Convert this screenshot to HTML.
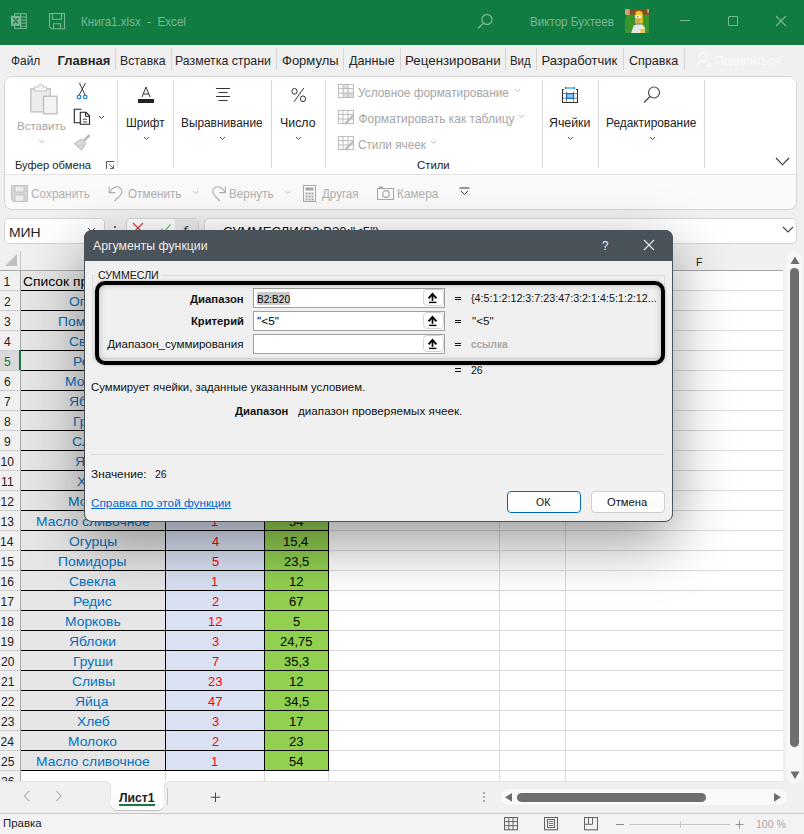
<!DOCTYPE html>
<html><head><meta charset='utf-8'><style>
html,body{margin:0;padding:0;width:804px;height:834px;overflow:hidden;position:relative;font-family:"Liberation Sans", sans-serif}
span{white-space:pre;line-height:1;font-family:"Liberation Sans", sans-serif}
</style></head><body>
<div style='position:absolute;left:0px;top:0px;width:804px;height:834px;background:#f0f0f0'></div><div style='position:absolute;left:0px;top:0px;width:804px;height:45px;background:#107c41'></div><svg style='position:absolute;left:10px;top:12px;' width='18' height='18' viewBox='0 0 18 18'><rect x='4.6' y='1.7' width='11.7' height='14.7' fill='none' stroke='#7bb796' stroke-width='1'/><line x1='10.7' y1='1.7' x2='10.7' y2='16.4' stroke='#7bb796'/><line x1='10.7' y1='5' x2='16.3' y2='5' stroke='#7bb796'/><line x1='10.7' y1='8.1' x2='16.3' y2='8.1' stroke='#7bb796'/><line x1='10.7' y1='11.1' x2='16.3' y2='11.1' stroke='#7bb796'/><line x1='10.7' y1='14.2' x2='16.3' y2='14.2' stroke='#7bb796'/><rect x='0.9' y='3.8' width='9.8' height='10' fill='#7bb796'/><path d='M3.3 6 L8.3 11.6 M8.3 6 L3.3 11.6' stroke='#2a8050' stroke-width='1.5'/></svg><svg style='position:absolute;left:48px;top:12px;' width='18' height='18' viewBox='0 0 18 18'><path d='M1.5 1.5 H16.5 V16.8 H3.5 L1.5 14.8 Z' fill='none' stroke='#7bb796' stroke-width='1.1'/><path d='M4.5 1.5 V7.3 H13.5 V1.5' fill='none' stroke='#7bb796' stroke-width='1.1'/><path d='M5.5 16.8 V11.7 H12.5 V16.8' fill='none' stroke='#7bb796' stroke-width='1.1'/></svg><span style='position:absolute;left:80.74px;top:15.90px;font-size:12.1px;font-weight:400;font-style:normal;color:#7bb796;transform:scaleX(0.9602);transform-origin:0 0;'>Книга1.xlsx  -  Excel</span><svg style='position:absolute;left:477px;top:13px;' width='17' height='17' viewBox='0 0 17 17'><circle cx='10' cy='6.5' r='5' fill='none' stroke='#7bb796' stroke-width='1.3'/><line x1='6.5' y1='10' x2='1' y2='15.5' stroke='#7bb796' stroke-width='1.4'/></svg><span style='position:absolute;left:529.64px;top:16.00px;font-size:12.1px;font-weight:400;font-style:normal;color:#7bb796;transform:scaleX(0.9605);transform-origin:0 0;'>Виктор Бухтеев</span><svg style='position:absolute;left:625px;top:9px;' width='24' height='24' viewBox='0 0 24 24'><rect width='24' height='24' fill='#3a962a'/><rect width='24' height='5.6' fill='#8a4b22'/><rect x='0' y='0' width='4.7' height='6' fill='#c9a27a'/><rect x='22.2' y='0' width='1.8' height='3.8' fill='#c9a27a'/><rect x='0' y='5.6' width='1' height='4' fill='#6a4a20'/><path d='M10.3 14.5 V5 Q10.5 1.8 14 1.8 Q17.8 1.8 17.8 5.5 V14.5 Z' fill='#f2c51c'/><ellipse cx='12' cy='7.3' rx='2' ry='1.6' fill='#fff'/><ellipse cx='14.6' cy='7.3' rx='1.6' ry='1.5' fill='#fff'/><circle cx='12.8' cy='7.4' r='0.6' fill='#222'/><path d='M10 9.5 H15.5 V13.5 Q13 14.5 10 13 Z' fill='#d1a85c'/><path d='M6.2 24 L9 15.5 H17.5 L19.8 18.3 V24 Z' fill='#e6e6e6'/><rect x='15.5' y='20' width='3.8' height='4' fill='#f2c51c'/><path d='M9 15.5 L10.5 15.5' stroke='#333' stroke-width='0.8'/></svg><div style='position:absolute;left:680px;top:20px;width:10px;height:1px;background:#7bb796'></div><div style='position:absolute;left:728px;top:16px;width:10px;height:10px;border:1px solid #7bb796;box-sizing:border-box;border-radius:1px'></div><svg style='position:absolute;left:775px;top:15px;' width='12' height='12' viewBox='0 0 12 12'><line x1='1' y1='1' x2='11' y2='11' stroke='#7bb796' stroke-width='1.1'/><line x1='11' y1='1' x2='1' y2='11' stroke='#7bb796' stroke-width='1.1'/></svg><span style='position:absolute;left:11.20px;top:53.80px;font-size:13px;font-weight:400;font-style:normal;color:#262626;transform:scaleX(0.9156);transform-origin:0 0;'>Файл</span><span style='position:absolute;left:57.50px;top:53.80px;font-size:13px;font-weight:700;font-style:normal;color:#262626;'>Главная</span><span style='position:absolute;left:120.06px;top:53.80px;font-size:13px;font-weight:400;font-style:normal;color:#262626;transform:scaleX(0.9447);transform-origin:0 0;'>Вставка</span><span style='position:absolute;left:175.25px;top:53.80px;font-size:13px;font-weight:400;font-style:normal;color:#262626;transform:scaleX(0.9480);transform-origin:0 0;'>Разметка страни</span><span style='position:absolute;left:282.00px;top:53.80px;font-size:13px;font-weight:400;font-style:normal;color:#262626;'>Формулы</span><span style='position:absolute;left:348.80px;top:53.80px;font-size:13px;font-weight:400;font-style:normal;color:#262626;transform:scaleX(0.9723);transform-origin:0 0;'>Данные</span><span style='position:absolute;left:404.57px;top:53.80px;font-size:13px;font-weight:400;font-style:normal;color:#262626;transform:scaleX(1.0261);transform-origin:0 0;'>Рецензировани</span><span style='position:absolute;left:509.52px;top:53.80px;font-size:13px;font-weight:400;font-style:normal;color:#262626;transform:scaleX(0.8783);transform-origin:0 0;'>Вид</span><span style='position:absolute;left:541.40px;top:53.80px;font-size:13px;font-weight:400;font-style:normal;color:#262626;'>Разработчик</span><span style='position:absolute;left:629.20px;top:53.80px;font-size:13px;font-weight:400;font-style:normal;color:#262626;transform:scaleX(0.9647);transform-origin:0 0;'>Справка</span><div style='position:absolute;left:115px;top:48px;width:1px;height:22px;background:#d4d4d4'></div><div style='position:absolute;left:171px;top:48px;width:1px;height:22px;background:#d4d4d4'></div><div style='position:absolute;left:276px;top:48px;width:1px;height:22px;background:#d4d4d4'></div><div style='position:absolute;left:343px;top:48px;width:1px;height:22px;background:#d4d4d4'></div><div style='position:absolute;left:400px;top:48px;width:1px;height:22px;background:#d4d4d4'></div><div style='position:absolute;left:505px;top:48px;width:1px;height:22px;background:#d4d4d4'></div><div style='position:absolute;left:536px;top:48px;width:1px;height:22px;background:#d4d4d4'></div><div style='position:absolute;left:623px;top:48px;width:1px;height:22px;background:#d4d4d4'></div><div style='position:absolute;left:684px;top:48px;width:1px;height:22px;background:#d4d4d4'></div><svg style='position:absolute;left:696px;top:52px;' width='17' height='17' viewBox='0 0 17 17'><circle cx='7' cy='5' r='4' fill='none' stroke='#fafafa' stroke-width='1.2'/><path d='M1 16 C1 11 4 9.5 7 9.5 C9 9.5 10 10 11 10.5' fill='none' stroke='#fafafa' stroke-width='1.2'/><line x1='10' y1='13.5' x2='16' y2='13.5' stroke='#fafafa' stroke-width='1.2'/><line x1='13' y1='10.5' x2='13' y2='16.5' stroke='#fafafa' stroke-width='1.2'/></svg><span style='position:absolute;left:715.09px;top:53.80px;font-size:13px;font-weight:400;font-style:normal;color:#fafafa;transform:scaleX(0.9143);transform-origin:0 0;'>Поделиться</span><div style='position:absolute;left:3.5px;top:75.5px;width:793px;height:134px;background:#fafafa;border:1px solid #d6d6d6;border-radius:8px;box-sizing:border-box'></div><div style='position:absolute;left:4.5px;top:76.5px;width:791px;height:97.5px;background:#fff;border-radius:7px 7px 0 0'></div><div style='position:absolute;left:4.5px;top:174px;width:791px;height:1px;background:#e1e1e1'></div><div style='position:absolute;left:117px;top:80px;width:1px;height:88px;background:#d9d9d9'></div><div style='position:absolute;left:173px;top:80px;width:1px;height:88px;background:#d9d9d9'></div><div style='position:absolute;left:271px;top:80px;width:1px;height:88px;background:#d9d9d9'></div><div style='position:absolute;left:325px;top:80px;width:1px;height:88px;background:#d9d9d9'></div><div style='position:absolute;left:542px;top:80px;width:1px;height:88px;background:#d9d9d9'></div><div style='position:absolute;left:598px;top:80px;width:1px;height:88px;background:#d9d9d9'></div><div style='position:absolute;left:704px;top:80px;width:1px;height:88px;background:#d9d9d9'></div><svg style='position:absolute;left:29px;top:83px;' width='30' height='32' viewBox='0 0 30 32'><rect x='1.8' y='5.8' width='19.5' height='23' fill='#ececec' stroke='#c8c8c8' stroke-width='1.6'/><path d='M5.5 8 V4 H9 A2.5 2.5 0 0 1 14 4 H17.5 V8 Z' fill='#f5f5f5' stroke='#c8c8c8' stroke-width='1.1'/><rect x='14.5' y='13.2' width='13.5' height='17.6' fill='#f3f3f3' stroke='#bcbcbc' stroke-width='1.3'/></svg><span style='position:absolute;left:16.61px;top:119.90px;font-size:11.7px;font-weight:400;font-style:normal;color:#a6a6a6;transform:scaleX(0.9854);transform-origin:0 0;'>Вставить</span><svg style='position:absolute;left:37.7px;top:138.75px;' width='7' height='4.5' viewBox='0 0 7 4.5'><polyline points='1,1 3.5,3.5 6,1' fill='none' stroke='#bdbdbd' stroke-width='1'/></svg><svg style='position:absolute;left:76px;top:82px;' width='14' height='18' viewBox='0 0 14 18'><line x1='3.5' y1='1' x2='9.2' y2='13.3' stroke='#333' stroke-width='1'/><line x1='9.5' y1='1' x2='3' y2='13.3' stroke='#333' stroke-width='1'/><circle cx='3' cy='15' r='1.8' fill='none' stroke='#1e88e5' stroke-width='1.3'/><circle cx='9.2' cy='15' r='1.8' fill='none' stroke='#1e88e5' stroke-width='1.3'/></svg><svg style='position:absolute;left:73px;top:108px;' width='18' height='18' viewBox='0 0 18 18'><path d='M8.5 1.3 H1.3 V14.8 H7' fill='none' stroke='#222' stroke-width='1.1'/><path d='M7.3 4.3 H13 L16.5 7.8 V16.3 H7.3 Z' fill='#fff' stroke='#222' stroke-width='1.1'/><path d='M12.5 4.3 V8.3 H16.5' fill='none' stroke='#222' stroke-width='1'/><line x1='10' y1='11.2' x2='14' y2='11.2' stroke='#333' stroke-width='0.9'/><line x1='10' y1='13.9' x2='14' y2='13.9' stroke='#333' stroke-width='0.9'/></svg><svg style='position:absolute;left:97.5px;top:114.75px;' width='7' height='4.5' viewBox='0 0 7 4.5'><polyline points='1,1 3.5,3.5 6,1' fill='none' stroke='#444' stroke-width='1'/></svg><svg style='position:absolute;left:73px;top:134px;' width='18' height='17' viewBox='0 0 18 17'><line x1='15.8' y1='1.8' x2='11.5' y2='6.2' stroke='#b4b4b4' stroke-width='2.4' stroke-linecap='round'/><path d='M1.5 9.5 L8.5 5 L12.8 9.3 L8.5 16 Z' fill='#dadada' stroke='#b4b4b4' stroke-width='1'/><path d='M5 12 L10.5 11' stroke='#c4c4c4' stroke-width='0.8'/></svg><span style='position:absolute;left:14.68px;top:160.00px;font-size:11px;font-weight:400;font-style:normal;color:#222;transform:scaleX(1.0176);transform-origin:0 0;'>Буфер обмена</span><svg style='position:absolute;left:106px;top:161px;' width='9' height='9' viewBox='0 0 9 9'><rect x='0.5' y='0.5' width='7.5' height='7.5' fill='none' stroke='#555' stroke-width='0.8' stroke-dasharray='8 16'/><path d='M0.5 8 V0.5 H8' fill='none' stroke='#555' stroke-width='0.9'/><line x1='3' y1='3' x2='7.5' y2='7.5' stroke='#555' stroke-width='0.9'/><path d='M4 7.5 H7.5 V4' fill='none' stroke='#555' stroke-width='0.9'/></svg><svg style='position:absolute;left:137px;top:86px;' width='18' height='18' viewBox='0 0 18 18'><path d='M5 11 L9 1 L13 11 M6.3 8 H11.7' fill='none' stroke='#333' stroke-width='1'/><rect x='1' y='13' width='16' height='4' fill='#222'/></svg><span style='position:absolute;left:125.72px;top:117.00px;font-size:12px;font-weight:400;font-style:normal;color:#222;transform:scaleX(0.9769);transform-origin:0 0;'>Шрифт</span><svg style='position:absolute;left:142.7px;top:135.75px;' width='7' height='4.5' viewBox='0 0 7 4.5'><polyline points='1,1 3.5,3.5 6,1' fill='none' stroke='#555' stroke-width='1'/></svg><svg style='position:absolute;left:215px;top:87px;' width='17' height='15' viewBox='0 0 17 15'><line x1='1' y1='1.5' x2='15' y2='1.5' stroke='#333'/><line x1='3.5' y1='5.5' x2='12.5' y2='5.5' stroke='#333'/><line x1='1' y1='9.5' x2='15' y2='9.5' stroke='#333'/><line x1='3.5' y1='13.5' x2='12.5' y2='13.5' stroke='#333'/></svg><span style='position:absolute;left:181.01px;top:117.00px;font-size:12px;font-weight:400;font-style:normal;color:#222;transform:scaleX(0.9878);transform-origin:0 0;'>Выравнивание</span><svg style='position:absolute;left:219.0px;top:135.75px;' width='7' height='4.5' viewBox='0 0 7 4.5'><polyline points='1,1 3.5,3.5 6,1' fill='none' stroke='#555' stroke-width='1'/></svg><svg style='position:absolute;left:290px;top:87px;' width='18' height='17' viewBox='0 0 18 17'><ellipse cx='4.5' cy='4.3' rx='2.6' ry='2.9' fill='none' stroke='#333' stroke-width='1'/><ellipse cx='13' cy='11.8' rx='2.6' ry='2.9' fill='none' stroke='#333' stroke-width='1'/><line x1='13.8' y1='1' x2='4' y2='14.8' stroke='#333' stroke-width='1'/></svg><span style='position:absolute;left:279.97px;top:117.00px;font-size:12px;font-weight:400;font-style:normal;color:#222;transform:scaleX(1.0303);transform-origin:0 0;'>Число</span><svg style='position:absolute;left:295.0px;top:135.75px;' width='7' height='4.5' viewBox='0 0 7 4.5'><polyline points='1,1 3.5,3.5 6,1' fill='none' stroke='#555' stroke-width='1'/></svg><svg style='position:absolute;left:338px;top:84px;' width='16' height='15' viewBox='0 0 16 15'><rect x='5' y='1' width='5' height='3.5' fill='#dcdcdc'/><rect x='5' y='5' width='1' height='4' fill='#dcdcdc'/><rect x='5' y='9' width='10' height='4.5' fill='#dcdcdc'/><rect x='6' y='5' width='9' height='4' fill='#f4f4f4'/></svg><svg style='position:absolute;left:338px;top:84px;' width='16' height='15' viewBox='0 0 16 15'><rect x='0.5' y='0.5' width='15' height='13' fill='none' stroke='#bdbdbd'/><line x1='0.5' y1='4.5' x2='15.5' y2='4.5' stroke='#bdbdbd'/><line x1='0.5' y1='9' x2='15.5' y2='9' stroke='#bdbdbd'/><line x1='5' y1='0.5' x2='5' y2='13.5' stroke='#bdbdbd'/><line x1='10' y1='0.5' x2='10' y2='13.5' stroke='#bdbdbd'/></svg><span style='position:absolute;left:358.40px;top:86.50px;font-size:12px;font-weight:400;font-style:normal;color:#a6a6a6;transform:scaleX(0.9889);transform-origin:0 0;'>Условное форматирование</span><svg style='position:absolute;left:513.5px;top:88.25px;' width='7' height='4.5' viewBox='0 0 7 4.5'><polyline points='1,1 3.5,3.5 6,1' fill='none' stroke='#bdbdbd' stroke-width='1'/></svg><svg style='position:absolute;left:338px;top:110px;' width='16' height='15' viewBox='0 0 16 15'><rect x='0.5' y='0.5' width='15' height='13' fill='none' stroke='#bdbdbd'/><line x1='0.5' y1='4.5' x2='15.5' y2='4.5' stroke='#bdbdbd'/><line x1='0.5' y1='9' x2='15.5' y2='9' stroke='#bdbdbd'/><line x1='5' y1='0.5' x2='5' y2='13.5' stroke='#bdbdbd'/><line x1='10' y1='0.5' x2='10' y2='13.5' stroke='#bdbdbd'/></svg><svg style='position:absolute;left:344px;top:113px;' width='11' height='12' viewBox='0 0 11 12'><path d='M1.5 10.5 L9.5 2' stroke='#bdbdbd' stroke-width='2.4'/><path d='M1 11 L3 11' stroke='#bdbdbd' stroke-width='1'/></svg><span style='position:absolute;left:358.40px;top:112.50px;font-size:12px;font-weight:400;font-style:normal;color:#a6a6a6;'>Форматировать как таблицу</span><svg style='position:absolute;left:517.5px;top:114.25px;' width='7' height='4.5' viewBox='0 0 7 4.5'><polyline points='1,1 3.5,3.5 6,1' fill='none' stroke='#bdbdbd' stroke-width='1'/></svg><svg style='position:absolute;left:338px;top:136px;' width='16' height='15' viewBox='0 0 16 15'><rect x='0.5' y='0.5' width='15' height='13' fill='none' stroke='#bdbdbd'/><line x1='0.5' y1='4.5' x2='15.5' y2='4.5' stroke='#bdbdbd'/><line x1='0.5' y1='9' x2='15.5' y2='9' stroke='#bdbdbd'/><line x1='5' y1='0.5' x2='5' y2='13.5' stroke='#bdbdbd'/><line x1='10' y1='0.5' x2='10' y2='13.5' stroke='#bdbdbd'/></svg><svg style='position:absolute;left:344px;top:139px;' width='11' height='12' viewBox='0 0 11 12'><path d='M1.5 10.5 L9.5 2' stroke='#bdbdbd' stroke-width='2.4'/><path d='M1 11 L3 11' stroke='#bdbdbd' stroke-width='1'/></svg><span style='position:absolute;left:358.40px;top:138.50px;font-size:12px;font-weight:400;font-style:normal;color:#a6a6a6;transform:scaleX(0.9797);transform-origin:0 0;'>Стили ячеек</span><svg style='position:absolute;left:429.5px;top:140.25px;' width='7' height='4.5' viewBox='0 0 7 4.5'><polyline points='1,1 3.5,3.5 6,1' fill='none' stroke='#bdbdbd' stroke-width='1'/></svg><span style='position:absolute;left:417.00px;top:160.00px;font-size:11px;font-weight:400;font-style:normal;color:#222;transform:scaleX(1.0323);transform-origin:0 0;'>Стили</span><svg style='position:absolute;left:561px;top:85px;' width='18' height='19' viewBox='0 0 18 19'><path d='M3 4.5 H1.5 V17.5 H16.5 V4.5 H15' fill='none' stroke='#333' stroke-width='1.1'/><line x1='1.5' y1='8.5' x2='16.5' y2='8.5' stroke='#555' stroke-width='0.7'/><line x1='1.5' y1='13.3' x2='16.5' y2='13.3' stroke='#555' stroke-width='0.7'/><line x1='5.5' y1='6.5' x2='5.5' y2='17.5' stroke='#555' stroke-width='0.7'/><line x1='12.5' y1='6.5' x2='12.5' y2='17.5' stroke='#555' stroke-width='0.7'/><rect x='5.6' y='8.6' width='7' height='4.8' fill='#8cc4f0' stroke='#0f6cbd' stroke-width='1.2'/><line x1='4.5' y1='3' x2='13.5' y2='3' stroke='#1a86d8' stroke-width='1.1'/><line x1='4.5' y1='1.8' x2='4.5' y2='4.2' stroke='#1a86d8' stroke-width='1.1'/><line x1='13.5' y1='1.8' x2='13.5' y2='4.2' stroke='#1a86d8' stroke-width='1.1'/></svg><span style='position:absolute;left:548.87px;top:117.00px;font-size:12px;font-weight:400;font-style:normal;color:#222;transform:scaleX(1.0256);transform-origin:0 0;'>Ячейки</span><svg style='position:absolute;left:566.5px;top:135.75px;' width='7' height='4.5' viewBox='0 0 7 4.5'><polyline points='1,1 3.5,3.5 6,1' fill='none' stroke='#555' stroke-width='1'/></svg><svg style='position:absolute;left:643px;top:86px;' width='18' height='18' viewBox='0 0 18 18'><circle cx='11' cy='6.5' r='5.5' fill='none' stroke='#444' stroke-width='1.1'/><line x1='7' y1='10.5' x2='1' y2='16.5' stroke='#444' stroke-width='1.2'/></svg><span style='position:absolute;left:606.01px;top:117.00px;font-size:12px;font-weight:400;font-style:normal;color:#222;transform:scaleX(0.9889);transform-origin:0 0;'>Редактирование</span><svg style='position:absolute;left:648.5px;top:135.75px;' width='7' height='4.5' viewBox='0 0 7 4.5'><polyline points='1,1 3.5,3.5 6,1' fill='none' stroke='#555' stroke-width='1'/></svg><svg style='position:absolute;left:775.0px;top:156.9px;' width='15' height='8.8' viewBox='0 0 15 8.8'><polyline points='1,1 7.5,7.8 14,1' fill='none' stroke='#333' stroke-width='1.1'/></svg><svg style='position:absolute;left:11px;top:185px;' width='17' height='17' viewBox='0 0 17 17'><path d='M0.5 0.5 H16.5 V16.5 H2.5 L0.5 14.5 Z' fill='#d6d6d6' stroke='#c2c2c2'/><rect x='4' y='1' width='9' height='6' fill='#ededed' stroke='#c2c2c2'/><rect x='4' y='10' width='9' height='6.5' fill='#ededed' stroke='#c2c2c2'/></svg><span style='position:absolute;left:31.00px;top:188.00px;font-size:12px;font-weight:400;font-style:normal;color:#b0b0b0;transform:scaleX(0.9867);transform-origin:0 0;'>Сохранить</span><svg style='position:absolute;left:107px;top:184px;' width='17' height='18' viewBox='0 0 17 18'><path d='M2.2 2.5 V8.6 H8.4' fill='none' stroke='#b0b0b0' stroke-width='1.1'/><path d='M2.6 8 C6 2.5 10.5 1.8 13.2 4 C15.8 6.3 15 9.5 13 11.6 L7.6 17' fill='none' stroke='#b0b0b0' stroke-width='1.1'/></svg><span style='position:absolute;left:128.40px;top:188.00px;font-size:12px;font-weight:400;font-style:normal;color:#b0b0b0;transform:scaleX(0.9745);transform-origin:0 0;'>Отменить</span><svg style='position:absolute;left:191.8px;top:189.75px;' width='7' height='4.5' viewBox='0 0 7 4.5'><polyline points='1,1 3.5,3.5 6,1' fill='none' stroke='#bdbdbd' stroke-width='1'/></svg><svg style='position:absolute;left:210px;top:184px;' width='17' height='18' viewBox='0 0 17 18'><path d='M15.4 2.5 V8.6 H9.2' fill='none' stroke='#b0b0b0' stroke-width='1.1'/><path d='M15 8 C11.6 2.5 7.1 1.8 4.4 4 C1.8 6.3 2.6 9.5 4.6 11.6 L10 17' fill='none' stroke='#b0b0b0' stroke-width='1.1'/></svg><span style='position:absolute;left:228.52px;top:188.00px;font-size:12px;font-weight:400;font-style:normal;color:#b0b0b0;transform:scaleX(0.9778);transform-origin:0 0;'>Вернуть</span><svg style='position:absolute;left:284.0px;top:189.75px;' width='7' height='4.5' viewBox='0 0 7 4.5'><polyline points='1,1 3.5,3.5 6,1' fill='none' stroke='#bdbdbd' stroke-width='1'/></svg><svg style='position:absolute;left:303px;top:185px;' width='13' height='17' viewBox='0 0 13 17'><rect x='0.5' y='0.5' width='12' height='16' fill='none' stroke='#a8a8a8'/><rect x='2.5' y='2.5' width='8' height='3' fill='#a8a8a8'/><g fill='#a8a8a8'><rect x='2.5' y='7.5' width='2' height='2'/><rect x='5.5' y='7.5' width='2' height='2'/><rect x='8.5' y='7.5' width='2' height='2'/><rect x='2.5' y='10.5' width='2' height='2'/><rect x='5.5' y='10.5' width='2' height='2'/><rect x='8.5' y='10.5' width='2' height='2'/><rect x='2.5' y='13.5' width='2' height='2'/><rect x='5.5' y='13.5' width='2' height='2'/><rect x='8.5' y='13.5' width='2' height='2'/></g></svg><span style='position:absolute;left:322.40px;top:188.00px;font-size:12px;font-weight:400;font-style:normal;color:#b0b0b0;transform:scaleX(0.9632);transform-origin:0 0;'>Другая</span><svg style='position:absolute;left:377px;top:186px;' width='17' height='14' viewBox='0 0 17 14'><rect x='0.5' y='2.5' width='16' height='11' fill='none' stroke='#a8a8a8'/><rect x='2' y='0.5' width='4' height='2' fill='#a8a8a8'/><circle cx='9' cy='8' r='3.3' fill='none' stroke='#a8a8a8' stroke-width='1.2'/></svg><span style='position:absolute;left:396.91px;top:188.00px;font-size:12px;font-weight:400;font-style:normal;color:#b0b0b0;transform:scaleX(0.9854);transform-origin:0 0;'>Камера</span><svg style='position:absolute;left:459px;top:187px;' width='11' height='9' viewBox='0 0 11 9'><line x1='0.5' y1='1' x2='10.5' y2='1' stroke='#333'/><polyline points='2,4 5.5,7.5 9,4' fill='none' stroke='#333'/></svg><div style='position:absolute;left:3.5px;top:218px;width:101px;height:26px;background:#fff;border:1px solid #d6d6d6;border-radius:5px;box-sizing:border-box'></div><span style='position:absolute;left:9.19px;top:226.50px;font-size:12.5px;font-weight:400;font-style:normal;color:#222;transform:scaleX(1.1148);transform-origin:0 0;'>МИН</span><svg style='position:absolute;left:86.5px;top:227.25px;' width='9' height='5.5' viewBox='0 0 9 5.5'><polyline points='1,1 4.5,4.5 8,1' fill='none' stroke='#444' stroke-width='1'/></svg><div style='position:absolute;left:114px;top:226px;width:2px;height:2px;background:#444;border-radius:1px'></div><div style='position:absolute;left:125.5px;top:218px;width:73px;height:26px;background:#fff;border:1px solid #d6d6d6;border-radius:5px;box-sizing:border-box'></div><svg style='position:absolute;left:132px;top:222px;' width='12' height='12' viewBox='0 0 12 12'><line x1='1' y1='1' x2='11' y2='11' stroke='#e03c3c' stroke-width='1.3'/><line x1='11' y1='1' x2='1' y2='11' stroke='#e03c3c' stroke-width='1.3'/></svg><svg style='position:absolute;left:160px;top:223px;' width='12' height='10' viewBox='0 0 12 10'><polyline points='1.5,6 4.2,8.8 10.5,1.5' fill='none' stroke='#4caf50' stroke-width='1.1'/></svg><div style='position:absolute;left:175px;top:219px;width:23px;height:24px;background:#ececec'></div><span style='position:absolute;left:182.80px;top:224.00px;font-size:13px;font-weight:400;font-style:italic;color:#444;transform:scaleX(1.1400);transform-origin:0 0;'>f</span><span style='position:absolute;left:188.50px;top:229.50px;font-size:8px;font-weight:400;font-style:italic;color:#444;transform:scaleX(1.1750);transform-origin:0 0;'>x</span><div style='position:absolute;left:203.5px;top:218px;width:593px;height:26px;background:#fff;border:1px solid #d6d6d6;border-radius:5px;box-sizing:border-box'></div><span style='position:absolute;left:222.80px;top:224.60px;font-size:13px;font-weight:400;font-style:normal;color:#111;transform:scaleX(1.0196);transform-origin:0 0;'>СУММЕСЛИ(B2:B20;"&lt;5")</span><svg style='position:absolute;left:781.7px;top:225.9px;' width='12' height='7' viewBox='0 0 12 7'><polyline points='1,1 6.0,6 11,1' fill='none' stroke='#444' stroke-width='1.1'/></svg><div style='position:absolute;left:0px;top:245px;width:783px;height:26px;background:#f0f0f0'></div><svg style='position:absolute;left:5px;top:254px;' width='13' height='13' viewBox='0 0 13 13'><polygon points='12,0 12,12 0,12' fill='#c0c0c0'/></svg><div style='position:absolute;left:20px;top:251px;width:1px;height:20px;background:#c8c8c8'></div><div style='position:absolute;left:0px;top:270px;width:783px;height:1px;background:#a8a8a8'></div><span style='position:absolute;left:695.58px;top:256.50px;font-size:11.5px;font-weight:400;font-style:normal;color:#222;transform:scaleX(0.9167);transform-origin:0 0;'>F</span><div style='position:absolute;left:0px;top:271px;width:20px;height:510px;background:#f0f0f0'></div><div style='position:absolute;left:0px;top:350px;width:19px;height:20px;background:#d9d9d9'></div><div style='position:absolute;left:0px;top:290px;width:20px;height:1px;background:#cdcdcd'></div><div style='position:absolute;left:0px;top:310px;width:20px;height:1px;background:#cdcdcd'></div><div style='position:absolute;left:0px;top:330px;width:20px;height:1px;background:#cdcdcd'></div><div style='position:absolute;left:0px;top:350px;width:20px;height:1px;background:#cdcdcd'></div><div style='position:absolute;left:0px;top:370px;width:20px;height:1px;background:#cdcdcd'></div><div style='position:absolute;left:0px;top:390px;width:20px;height:1px;background:#cdcdcd'></div><div style='position:absolute;left:0px;top:410px;width:20px;height:1px;background:#cdcdcd'></div><div style='position:absolute;left:0px;top:430px;width:20px;height:1px;background:#cdcdcd'></div><div style='position:absolute;left:0px;top:450px;width:20px;height:1px;background:#cdcdcd'></div><div style='position:absolute;left:0px;top:470px;width:20px;height:1px;background:#cdcdcd'></div><div style='position:absolute;left:0px;top:490px;width:20px;height:1px;background:#cdcdcd'></div><div style='position:absolute;left:0px;top:510px;width:20px;height:1px;background:#cdcdcd'></div><div style='position:absolute;left:0px;top:530px;width:20px;height:1px;background:#cdcdcd'></div><div style='position:absolute;left:0px;top:550px;width:20px;height:1px;background:#cdcdcd'></div><div style='position:absolute;left:0px;top:570px;width:20px;height:1px;background:#cdcdcd'></div><div style='position:absolute;left:0px;top:590px;width:20px;height:1px;background:#cdcdcd'></div><div style='position:absolute;left:0px;top:610px;width:20px;height:1px;background:#cdcdcd'></div><div style='position:absolute;left:0px;top:630px;width:20px;height:1px;background:#cdcdcd'></div><div style='position:absolute;left:0px;top:650px;width:20px;height:1px;background:#cdcdcd'></div><div style='position:absolute;left:0px;top:670px;width:20px;height:1px;background:#cdcdcd'></div><div style='position:absolute;left:0px;top:690px;width:20px;height:1px;background:#cdcdcd'></div><div style='position:absolute;left:0px;top:710px;width:20px;height:1px;background:#cdcdcd'></div><div style='position:absolute;left:0px;top:730px;width:20px;height:1px;background:#cdcdcd'></div><div style='position:absolute;left:0px;top:750px;width:20px;height:1px;background:#cdcdcd'></div><div style='position:absolute;left:0px;top:770px;width:20px;height:1px;background:#cdcdcd'></div><div style='position:absolute;left:0px;top:790px;width:20px;height:1px;background:#cdcdcd'></div><div style='position:absolute;left:20px;top:271px;width:1px;height:510px;background:#a8a8a8'></div><div style='position:absolute;left:19px;top:350px;width:2px;height:20px;background:#107c41'></div><div style='position:absolute;left:21px;top:271px;width:762px;height:510px;background:#fff'></div><div style='position:absolute;left:21px;top:271px;width:144px;height:500px;background:#e7e6e6'></div><div style='position:absolute;left:165px;top:291px;width:99px;height:480px;background:#d9e1f2'></div><div style='position:absolute;left:264px;top:291px;width:64px;height:480px;background:#92d050'></div><div style='position:absolute;left:328px;top:290px;width:455px;height:1px;background:#dadada'></div><div style='position:absolute;left:328px;top:310px;width:455px;height:1px;background:#dadada'></div><div style='position:absolute;left:328px;top:330px;width:455px;height:1px;background:#dadada'></div><div style='position:absolute;left:328px;top:350px;width:455px;height:1px;background:#dadada'></div><div style='position:absolute;left:328px;top:370px;width:455px;height:1px;background:#dadada'></div><div style='position:absolute;left:328px;top:390px;width:455px;height:1px;background:#dadada'></div><div style='position:absolute;left:328px;top:410px;width:455px;height:1px;background:#dadada'></div><div style='position:absolute;left:328px;top:430px;width:455px;height:1px;background:#dadada'></div><div style='position:absolute;left:328px;top:450px;width:455px;height:1px;background:#dadada'></div><div style='position:absolute;left:328px;top:470px;width:455px;height:1px;background:#dadada'></div><div style='position:absolute;left:328px;top:490px;width:455px;height:1px;background:#dadada'></div><div style='position:absolute;left:328px;top:510px;width:455px;height:1px;background:#dadada'></div><div style='position:absolute;left:328px;top:530px;width:455px;height:1px;background:#dadada'></div><div style='position:absolute;left:328px;top:550px;width:455px;height:1px;background:#dadada'></div><div style='position:absolute;left:328px;top:570px;width:455px;height:1px;background:#dadada'></div><div style='position:absolute;left:328px;top:590px;width:455px;height:1px;background:#dadada'></div><div style='position:absolute;left:328px;top:610px;width:455px;height:1px;background:#dadada'></div><div style='position:absolute;left:328px;top:630px;width:455px;height:1px;background:#dadada'></div><div style='position:absolute;left:328px;top:650px;width:455px;height:1px;background:#dadada'></div><div style='position:absolute;left:328px;top:670px;width:455px;height:1px;background:#dadada'></div><div style='position:absolute;left:328px;top:690px;width:455px;height:1px;background:#dadada'></div><div style='position:absolute;left:328px;top:710px;width:455px;height:1px;background:#dadada'></div><div style='position:absolute;left:328px;top:730px;width:455px;height:1px;background:#dadada'></div><div style='position:absolute;left:328px;top:750px;width:455px;height:1px;background:#dadada'></div><div style='position:absolute;left:328px;top:770px;width:455px;height:1px;background:#dadada'></div><div style='position:absolute;left:499px;top:271px;width:1px;height:510px;background:#dadada'></div><div style='position:absolute;left:565px;top:271px;width:1px;height:510px;background:#dadada'></div><div style='position:absolute;left:165px;top:771px;width:1px;height:10px;background:#dadada'></div><div style='position:absolute;left:264px;top:771px;width:1px;height:10px;background:#dadada'></div><div style='position:absolute;left:328px;top:771px;width:1px;height:10px;background:#dadada'></div><div style='position:absolute;left:21px;top:290px;width:308px;height:1px;background:#000'></div><div style='position:absolute;left:21px;top:310px;width:308px;height:1px;background:#000'></div><div style='position:absolute;left:21px;top:330px;width:308px;height:1px;background:#000'></div><div style='position:absolute;left:21px;top:350px;width:308px;height:1px;background:#000'></div><div style='position:absolute;left:21px;top:370px;width:308px;height:1px;background:#000'></div><div style='position:absolute;left:21px;top:390px;width:308px;height:1px;background:#000'></div><div style='position:absolute;left:21px;top:410px;width:308px;height:1px;background:#000'></div><div style='position:absolute;left:21px;top:430px;width:308px;height:1px;background:#000'></div><div style='position:absolute;left:21px;top:450px;width:308px;height:1px;background:#000'></div><div style='position:absolute;left:21px;top:470px;width:308px;height:1px;background:#000'></div><div style='position:absolute;left:21px;top:490px;width:308px;height:1px;background:#000'></div><div style='position:absolute;left:21px;top:510px;width:308px;height:1px;background:#000'></div><div style='position:absolute;left:21px;top:530px;width:308px;height:1px;background:#000'></div><div style='position:absolute;left:21px;top:550px;width:308px;height:1px;background:#000'></div><div style='position:absolute;left:21px;top:570px;width:308px;height:1px;background:#000'></div><div style='position:absolute;left:21px;top:590px;width:308px;height:1px;background:#000'></div><div style='position:absolute;left:21px;top:610px;width:308px;height:1px;background:#000'></div><div style='position:absolute;left:21px;top:630px;width:308px;height:1px;background:#000'></div><div style='position:absolute;left:21px;top:650px;width:308px;height:1px;background:#000'></div><div style='position:absolute;left:21px;top:670px;width:308px;height:1px;background:#000'></div><div style='position:absolute;left:21px;top:690px;width:308px;height:1px;background:#000'></div><div style='position:absolute;left:21px;top:710px;width:308px;height:1px;background:#000'></div><div style='position:absolute;left:21px;top:730px;width:308px;height:1px;background:#000'></div><div style='position:absolute;left:21px;top:750px;width:308px;height:1px;background:#000'></div><div style='position:absolute;left:21px;top:770px;width:308px;height:1px;background:#000'></div><div style='position:absolute;left:165px;top:271px;width:1px;height:500px;background:#000'></div><div style='position:absolute;left:264px;top:271px;width:1px;height:500px;background:#000'></div><div style='position:absolute;left:328px;top:271px;width:1px;height:500px;background:#000'></div><span style='position:absolute;left:3.60px;top:275.80px;font-size:12.1px;font-weight:400;font-style:normal;color:#222;'>1</span><span style='position:absolute;left:4.10px;top:295.80px;font-size:12.1px;font-weight:400;font-style:normal;color:#222;'>2</span><span style='position:absolute;left:4.10px;top:315.80px;font-size:12.1px;font-weight:400;font-style:normal;color:#222;'>3</span><span style='position:absolute;left:4.10px;top:335.80px;font-size:12.1px;font-weight:400;font-style:normal;color:#222;'>4</span><span style='position:absolute;left:4.10px;top:355.80px;font-size:12.1px;font-weight:400;font-style:normal;color:#107c41;'>5</span><span style='position:absolute;left:4.10px;top:375.80px;font-size:12.1px;font-weight:400;font-style:normal;color:#222;'>6</span><span style='position:absolute;left:4.10px;top:395.80px;font-size:12.1px;font-weight:400;font-style:normal;color:#222;'>7</span><span style='position:absolute;left:4.10px;top:415.80px;font-size:12.1px;font-weight:400;font-style:normal;color:#222;'>8</span><span style='position:absolute;left:4.10px;top:435.80px;font-size:12.1px;font-weight:400;font-style:normal;color:#222;'>9</span><span style='position:absolute;left:0.60px;top:455.80px;font-size:12.1px;font-weight:400;font-style:normal;color:#222;'>10</span><span style='position:absolute;left:1.10px;top:475.80px;font-size:12.1px;font-weight:400;font-style:normal;color:#222;'>11</span><span style='position:absolute;left:0.60px;top:495.80px;font-size:12.1px;font-weight:400;font-style:normal;color:#222;'>12</span><span style='position:absolute;left:0.60px;top:515.80px;font-size:12.1px;font-weight:400;font-style:normal;color:#222;'>13</span><span style='position:absolute;left:0.10px;top:535.80px;font-size:12.1px;font-weight:400;font-style:normal;color:#222;'>14</span><span style='position:absolute;left:0.60px;top:555.80px;font-size:12.1px;font-weight:400;font-style:normal;color:#222;'>15</span><span style='position:absolute;left:0.60px;top:575.80px;font-size:12.1px;font-weight:400;font-style:normal;color:#222;'>16</span><span style='position:absolute;left:0.60px;top:595.80px;font-size:12.1px;font-weight:400;font-style:normal;color:#222;'>17</span><span style='position:absolute;left:0.60px;top:615.80px;font-size:12.1px;font-weight:400;font-style:normal;color:#222;'>18</span><span style='position:absolute;left:0.60px;top:635.80px;font-size:12.1px;font-weight:400;font-style:normal;color:#222;'>19</span><span style='position:absolute;left:1.10px;top:655.80px;font-size:12.1px;font-weight:400;font-style:normal;color:#222;'>20</span><span style='position:absolute;left:1.10px;top:675.80px;font-size:12.1px;font-weight:400;font-style:normal;color:#222;'>21</span><span style='position:absolute;left:1.10px;top:695.80px;font-size:12.1px;font-weight:400;font-style:normal;color:#222;'>22</span><span style='position:absolute;left:1.10px;top:715.80px;font-size:12.1px;font-weight:400;font-style:normal;color:#222;'>23</span><span style='position:absolute;left:0.60px;top:735.80px;font-size:12.1px;font-weight:400;font-style:normal;color:#222;'>24</span><span style='position:absolute;left:1.10px;top:755.80px;font-size:12.1px;font-weight:400;font-style:normal;color:#222;'>25</span><span style='position:absolute;left:1.10px;top:775.80px;font-size:12.1px;font-weight:400;font-style:normal;color:#222;'>26</span><span style='position:absolute;left:23.30px;top:275.80px;font-size:12.6px;font-weight:400;font-style:normal;color:#000;transform:scaleX(1.1);transform-origin:0 0;'>Список продуктов</span><span style='position:absolute;left:69.35px;top:295.70px;font-size:12.6px;font-weight:400;color:#0070c0;transform:scaleX(1.1);transform-origin:0 0'>Огурцы</span><span style='position:absolute;left:211.70px;top:295.70px;font-size:12.6px;font-weight:400;color:#ff0000;transform:scaleX(1.03);transform-origin:0 0'>4</span><span style='position:absolute;left:282.91px;top:295.70px;font-size:12.6px;font-weight:400;color:#000;transform:scaleX(1.03);transform-origin:0 0'>15,4</span><span style='position:absolute;left:58.35px;top:315.70px;font-size:12.6px;font-weight:400;color:#0070c0;transform:scaleX(1.1);transform-origin:0 0'>Помидоры</span><span style='position:absolute;left:211.70px;top:315.70px;font-size:12.6px;font-weight:400;color:#ff0000;transform:scaleX(1.03);transform-origin:0 0'>5</span><span style='position:absolute;left:283.94px;top:315.70px;font-size:12.6px;font-weight:400;color:#000;transform:scaleX(1.03);transform-origin:0 0'>23,5</span><span style='position:absolute;left:69.35px;top:335.70px;font-size:12.6px;font-weight:400;color:#0070c0;transform:scaleX(1.1);transform-origin:0 0'>Свекла</span><span style='position:absolute;left:211.18px;top:335.70px;font-size:12.6px;font-weight:400;color:#ff0000;transform:scaleX(1.03);transform-origin:0 0'>1</span><span style='position:absolute;left:288.57px;top:335.70px;font-size:12.6px;font-weight:400;color:#000;transform:scaleX(1.03);transform-origin:0 0'>12</span><span style='position:absolute;left:73.20px;top:355.70px;font-size:12.6px;font-weight:400;color:#0070c0;transform:scaleX(1.1);transform-origin:0 0'>Редис</span><span style='position:absolute;left:211.70px;top:355.70px;font-size:12.6px;font-weight:400;color:#ff0000;transform:scaleX(1.03);transform-origin:0 0'>2</span><span style='position:absolute;left:289.09px;top:355.70px;font-size:12.6px;font-weight:400;color:#000;transform:scaleX(1.03);transform-origin:0 0'>67</span><span style='position:absolute;left:64.95px;top:375.70px;font-size:12.6px;font-weight:400;color:#0070c0;transform:scaleX(1.1);transform-origin:0 0'>Морковь</span><span style='position:absolute;left:207.58px;top:375.70px;font-size:12.6px;font-weight:400;color:#ff0000;transform:scaleX(1.03);transform-origin:0 0'>12</span><span style='position:absolute;left:292.69px;top:375.70px;font-size:12.6px;font-weight:400;color:#000;transform:scaleX(1.03);transform-origin:0 0'>5</span><span style='position:absolute;left:69.35px;top:395.70px;font-size:12.6px;font-weight:400;color:#0070c0;transform:scaleX(1.1);transform-origin:0 0'>Яблоки</span><span style='position:absolute;left:211.70px;top:395.70px;font-size:12.6px;font-weight:400;color:#ff0000;transform:scaleX(1.03);transform-origin:0 0'>3</span><span style='position:absolute;left:280.34px;top:395.70px;font-size:12.6px;font-weight:400;color:#000;transform:scaleX(1.03);transform-origin:0 0'>24,75</span><span style='position:absolute;left:72.65px;top:415.70px;font-size:12.6px;font-weight:400;color:#0070c0;transform:scaleX(1.1);transform-origin:0 0'>Груши</span><span style='position:absolute;left:211.70px;top:415.70px;font-size:12.6px;font-weight:400;color:#ff0000;transform:scaleX(1.03);transform-origin:0 0'>7</span><span style='position:absolute;left:283.94px;top:415.70px;font-size:12.6px;font-weight:400;color:#000;transform:scaleX(1.03);transform-origin:0 0'>35,3</span><span style='position:absolute;left:71.55px;top:435.70px;font-size:12.6px;font-weight:400;color:#0070c0;transform:scaleX(1.1);transform-origin:0 0'>Сливы</span><span style='position:absolute;left:208.09px;top:435.70px;font-size:12.6px;font-weight:400;color:#ff0000;transform:scaleX(1.03);transform-origin:0 0'>23</span><span style='position:absolute;left:288.57px;top:435.70px;font-size:12.6px;font-weight:400;color:#000;transform:scaleX(1.03);transform-origin:0 0'>12</span><span style='position:absolute;left:75.40px;top:455.70px;font-size:12.6px;font-weight:400;color:#0070c0;transform:scaleX(1.1);transform-origin:0 0'>Яйца</span><span style='position:absolute;left:208.09px;top:455.70px;font-size:12.6px;font-weight:400;color:#ff0000;transform:scaleX(1.03);transform-origin:0 0'>47</span><span style='position:absolute;left:283.94px;top:455.70px;font-size:12.6px;font-weight:400;color:#000;transform:scaleX(1.03);transform-origin:0 0'>34,5</span><span style='position:absolute;left:76.50px;top:475.70px;font-size:12.6px;font-weight:400;color:#0070c0;transform:scaleX(1.1);transform-origin:0 0'>Хлеб</span><span style='position:absolute;left:211.70px;top:475.70px;font-size:12.6px;font-weight:400;color:#ff0000;transform:scaleX(1.03);transform-origin:0 0'>3</span><span style='position:absolute;left:288.57px;top:475.70px;font-size:12.6px;font-weight:400;color:#000;transform:scaleX(1.03);transform-origin:0 0'>17</span><span style='position:absolute;left:68.25px;top:495.70px;font-size:12.6px;font-weight:400;color:#0070c0;transform:scaleX(1.1);transform-origin:0 0'>Молоко</span><span style='position:absolute;left:211.70px;top:495.70px;font-size:12.6px;font-weight:400;color:#ff0000;transform:scaleX(1.03);transform-origin:0 0'>2</span><span style='position:absolute;left:289.09px;top:495.70px;font-size:12.6px;font-weight:400;color:#000;transform:scaleX(1.03);transform-origin:0 0'>23</span><span style='position:absolute;left:35.80px;top:515.70px;font-size:12.6px;font-weight:400;color:#0070c0;transform:scaleX(1.1);transform-origin:0 0'>Масло сливочное</span><span style='position:absolute;left:211.18px;top:515.70px;font-size:12.6px;font-weight:400;color:#ff0000;transform:scaleX(1.03);transform-origin:0 0'>1</span><span style='position:absolute;left:289.09px;top:515.70px;font-size:12.6px;font-weight:400;color:#000;transform:scaleX(1.03);transform-origin:0 0'>54</span><span style='position:absolute;left:69.35px;top:535.70px;font-size:12.6px;font-weight:400;color:#0070c0;transform:scaleX(1.1);transform-origin:0 0'>Огурцы</span><span style='position:absolute;left:211.70px;top:535.70px;font-size:12.6px;font-weight:400;color:#ff0000;transform:scaleX(1.03);transform-origin:0 0'>4</span><span style='position:absolute;left:282.91px;top:535.70px;font-size:12.6px;font-weight:400;color:#000;transform:scaleX(1.03);transform-origin:0 0'>15,4</span><span style='position:absolute;left:58.35px;top:555.70px;font-size:12.6px;font-weight:400;color:#0070c0;transform:scaleX(1.1);transform-origin:0 0'>Помидоры</span><span style='position:absolute;left:211.70px;top:555.70px;font-size:12.6px;font-weight:400;color:#ff0000;transform:scaleX(1.03);transform-origin:0 0'>5</span><span style='position:absolute;left:283.94px;top:555.70px;font-size:12.6px;font-weight:400;color:#000;transform:scaleX(1.03);transform-origin:0 0'>23,5</span><span style='position:absolute;left:69.35px;top:575.70px;font-size:12.6px;font-weight:400;color:#0070c0;transform:scaleX(1.1);transform-origin:0 0'>Свекла</span><span style='position:absolute;left:211.18px;top:575.70px;font-size:12.6px;font-weight:400;color:#ff0000;transform:scaleX(1.03);transform-origin:0 0'>1</span><span style='position:absolute;left:288.57px;top:575.70px;font-size:12.6px;font-weight:400;color:#000;transform:scaleX(1.03);transform-origin:0 0'>12</span><span style='position:absolute;left:73.20px;top:595.70px;font-size:12.6px;font-weight:400;color:#0070c0;transform:scaleX(1.1);transform-origin:0 0'>Редис</span><span style='position:absolute;left:211.70px;top:595.70px;font-size:12.6px;font-weight:400;color:#ff0000;transform:scaleX(1.03);transform-origin:0 0'>2</span><span style='position:absolute;left:289.09px;top:595.70px;font-size:12.6px;font-weight:400;color:#000;transform:scaleX(1.03);transform-origin:0 0'>67</span><span style='position:absolute;left:64.95px;top:615.70px;font-size:12.6px;font-weight:400;color:#0070c0;transform:scaleX(1.1);transform-origin:0 0'>Морковь</span><span style='position:absolute;left:207.58px;top:615.70px;font-size:12.6px;font-weight:400;color:#ff0000;transform:scaleX(1.03);transform-origin:0 0'>12</span><span style='position:absolute;left:292.69px;top:615.70px;font-size:12.6px;font-weight:400;color:#000;transform:scaleX(1.03);transform-origin:0 0'>5</span><span style='position:absolute;left:69.35px;top:635.70px;font-size:12.6px;font-weight:400;color:#0070c0;transform:scaleX(1.1);transform-origin:0 0'>Яблоки</span><span style='position:absolute;left:211.70px;top:635.70px;font-size:12.6px;font-weight:400;color:#ff0000;transform:scaleX(1.03);transform-origin:0 0'>3</span><span style='position:absolute;left:280.34px;top:635.70px;font-size:12.6px;font-weight:400;color:#000;transform:scaleX(1.03);transform-origin:0 0'>24,75</span><span style='position:absolute;left:72.65px;top:655.70px;font-size:12.6px;font-weight:400;color:#0070c0;transform:scaleX(1.1);transform-origin:0 0'>Груши</span><span style='position:absolute;left:211.70px;top:655.70px;font-size:12.6px;font-weight:400;color:#ff0000;transform:scaleX(1.03);transform-origin:0 0'>7</span><span style='position:absolute;left:283.94px;top:655.70px;font-size:12.6px;font-weight:400;color:#000;transform:scaleX(1.03);transform-origin:0 0'>35,3</span><span style='position:absolute;left:71.55px;top:675.70px;font-size:12.6px;font-weight:400;color:#0070c0;transform:scaleX(1.1);transform-origin:0 0'>Сливы</span><span style='position:absolute;left:208.09px;top:675.70px;font-size:12.6px;font-weight:400;color:#ff0000;transform:scaleX(1.03);transform-origin:0 0'>23</span><span style='position:absolute;left:288.57px;top:675.70px;font-size:12.6px;font-weight:400;color:#000;transform:scaleX(1.03);transform-origin:0 0'>12</span><span style='position:absolute;left:75.40px;top:695.70px;font-size:12.6px;font-weight:400;color:#0070c0;transform:scaleX(1.1);transform-origin:0 0'>Яйца</span><span style='position:absolute;left:208.09px;top:695.70px;font-size:12.6px;font-weight:400;color:#ff0000;transform:scaleX(1.03);transform-origin:0 0'>47</span><span style='position:absolute;left:283.94px;top:695.70px;font-size:12.6px;font-weight:400;color:#000;transform:scaleX(1.03);transform-origin:0 0'>34,5</span><span style='position:absolute;left:76.50px;top:715.70px;font-size:12.6px;font-weight:400;color:#0070c0;transform:scaleX(1.1);transform-origin:0 0'>Хлеб</span><span style='position:absolute;left:211.70px;top:715.70px;font-size:12.6px;font-weight:400;color:#ff0000;transform:scaleX(1.03);transform-origin:0 0'>3</span><span style='position:absolute;left:288.57px;top:715.70px;font-size:12.6px;font-weight:400;color:#000;transform:scaleX(1.03);transform-origin:0 0'>17</span><span style='position:absolute;left:68.25px;top:735.70px;font-size:12.6px;font-weight:400;color:#0070c0;transform:scaleX(1.1);transform-origin:0 0'>Молоко</span><span style='position:absolute;left:211.70px;top:735.70px;font-size:12.6px;font-weight:400;color:#ff0000;transform:scaleX(1.03);transform-origin:0 0'>2</span><span style='position:absolute;left:289.09px;top:735.70px;font-size:12.6px;font-weight:400;color:#000;transform:scaleX(1.03);transform-origin:0 0'>23</span><span style='position:absolute;left:35.80px;top:755.70px;font-size:12.6px;font-weight:400;color:#0070c0;transform:scaleX(1.1);transform-origin:0 0'>Масло сливочное</span><span style='position:absolute;left:211.18px;top:755.70px;font-size:12.6px;font-weight:400;color:#ff0000;transform:scaleX(1.03);transform-origin:0 0'>1</span><span style='position:absolute;left:289.09px;top:755.70px;font-size:12.6px;font-weight:400;color:#000;transform:scaleX(1.03);transform-origin:0 0'>54</span><div style='position:absolute;left:786px;top:252px;width:16px;height:531px;background:#f7f7f7;border-radius:8px'></div><svg style='position:absolute;left:790px;top:256px;' width='10' height='9' viewBox='0 0 10 9'><polygon points='5,0.5 9.5,8 0.5,8' fill='#6e6e6e'/></svg><div style='position:absolute;left:790px;top:268px;width:9px;height:479px;background:#6e6e6e;border-radius:4.5px'></div><svg style='position:absolute;left:790px;top:771px;' width='10' height='9' viewBox='0 0 10 9'><polygon points='0.5,0.5 9.5,0.5 5,8' fill='#6e6e6e'/></svg><div style='position:absolute;left:0px;top:781px;width:783px;height:32px;background:#f0f0f0'></div><svg style='position:absolute;left:23px;top:790px;' width='8' height='12' viewBox='0 0 8 12'><polyline points='6,1 1.5,6 6,11' fill='none' stroke='#a8a8a8' stroke-width='1.1'/></svg><svg style='position:absolute;left:55px;top:790px;' width='8' height='12' viewBox='0 0 8 12'><polyline points='1.5,1 6,6 1.5,11' fill='none' stroke='#a8a8a8' stroke-width='1.1'/></svg><div style='position:absolute;left:104.5px;top:781px;width:65px;height:6px;background:#fff'></div><div style='position:absolute;left:98.5px;top:781px;width:12px;height:12px;background:#f0f0f0;border-radius:0 6px 0 0;box-shadow:inset -1px 1px 0 #e2e2e2'></div><div style='position:absolute;left:163.5px;top:781px;width:12px;height:12px;background:#f0f0f0;border-radius:6px 0 0 0;box-shadow:inset 1px 1px 0 #e2e2e2'></div><div style='position:absolute;left:110.5px;top:781px;width:53px;height:28.5px;background:#fff;border-radius:0 0 6px 6px;box-shadow:0 0.6px 0.8px rgba(0,0,0,0.2)'></div><div style='position:absolute;left:0px;top:781px;width:98.5px;height:1px;background:#e2e2e2'></div><div style='position:absolute;left:175.5px;top:781px;width:607.5px;height:1px;background:#e2e2e2'></div><span style='position:absolute;left:119.00px;top:790.70px;font-size:13px;font-weight:700;font-style:normal;color:#222;transform:scaleX(0.9395);transform-origin:0 0;'>Лист1</span><div style='position:absolute;left:119px;top:804px;width:36px;height:2px;background:#107c41'></div><div style='position:absolute;left:167px;top:788px;width:1px;height:17px;background:#c4c4c4'></div><svg style='position:absolute;left:210px;top:791.5px;' width='11' height='11' viewBox='0 0 11 11'><line x1='5.5' y1='0.5' x2='5.5' y2='10' stroke='#444' stroke-width='1'/><line x1='0.8' y1='5.2' x2='10.2' y2='5.2' stroke='#444' stroke-width='1'/></svg><div style='position:absolute;left:483px;top:792px;width:2px;height:2px;background:#9a9a9a;border-radius:1px'></div><div style='position:absolute;left:483px;top:796px;width:2px;height:2px;background:#9a9a9a;border-radius:1px'></div><div style='position:absolute;left:483px;top:800px;width:2px;height:2px;background:#9a9a9a;border-radius:1px'></div><div style='position:absolute;left:500.5px;top:789px;width:286px;height:16px;background:#f9f9f9;border-radius:8px'></div><svg style='position:absolute;left:504px;top:792px;' width='9' height='11' viewBox='0 0 9 11'><polygon points='1,5.3 8,1 8,9.8' fill='#6e6e6e'/></svg><div style='position:absolute;left:517px;top:793px;width:189px;height:9px;background:#6e6e6e;border-radius:4.5px'></div><svg style='position:absolute;left:773px;top:792px;' width='9' height='11' viewBox='0 0 9 11'><polygon points='8,5.3 1,1 1,9.8' fill='#6e6e6e'/></svg><div style='position:absolute;left:0px;top:813px;width:804px;height:21px;background:#f3f3f3'></div><div style='position:absolute;left:0px;top:813px;width:804px;height:1px;background:#c8c8c8'></div><span style='position:absolute;left:2.71px;top:818.20px;font-size:11.5px;font-weight:400;font-style:normal;color:#222;transform:scaleX(0.9921);transform-origin:0 0;'>Правка</span><svg style='position:absolute;left:504px;top:817px;' width='14' height='14' viewBox='0 0 14 14'><rect x='0.5' y='0.5' width='13' height='12.3' fill='none' stroke='#666' stroke-width='1.1'/><line x1='4.8' y1='0.5' x2='4.8' y2='13' stroke='#666'/><line x1='9' y1='0.5' x2='9' y2='13' stroke='#666'/><line x1='0.5' y1='4.6' x2='13.5' y2='4.6' stroke='#666'/><line x1='0.5' y1='8.7' x2='13.5' y2='8.7' stroke='#666'/></svg><svg style='position:absolute;left:544px;top:817px;' width='14' height='14' viewBox='0 0 14 14'><rect x='0.5' y='0.5' width='13' height='12.3' fill='none' stroke='#666' stroke-width='1.1'/><rect x='3.5' y='2.5' width='7' height='8' fill='none' stroke='#666' stroke-width='1'/><line x1='4.8' y1='4.5' x2='9.2' y2='4.5' stroke='#666' stroke-width='0.9'/><line x1='4.8' y1='6.5' x2='9.2' y2='6.5' stroke='#666' stroke-width='0.9'/><line x1='4.8' y1='8.5' x2='9.2' y2='8.5' stroke='#666' stroke-width='0.9'/></svg><svg style='position:absolute;left:584px;top:817px;' width='14' height='14' viewBox='0 0 14 14'><rect x='0.5' y='0.5' width='13' height='12.3' fill='none' stroke='#666' stroke-width='1.1'/><path d='M0.5 7.3 H8.5 V0.5 M4.5 0.5 V7.3' fill='none' stroke='#666' stroke-width='1'/></svg><div style='position:absolute;left:616px;top:824px;width:8px;height:1px;background:#8a8a8a'></div><div style='position:absolute;left:629px;top:824px;width:101px;height:1px;background:#c8c8c8'></div><div style='position:absolute;left:680px;top:821px;width:1px;height:7px;background:#c8c8c8'></div><svg style='position:absolute;left:734.5px;top:819.5px;' width='9' height='9' viewBox='0 0 9 9'><line x1='4.5' y1='0.5' x2='4.5' y2='8.5' stroke='#8a8a8a' stroke-width='0.9'/><line x1='0.5' y1='4.5' x2='8.5' y2='4.5' stroke='#8a8a8a' stroke-width='0.9'/></svg><span style='position:absolute;left:755.59px;top:819.00px;font-size:11.5px;font-weight:400;font-style:normal;color:#a8a8a8;transform:scaleX(0.9125);transform-origin:0 0;'>100 %</span><div style='position:absolute;left:84px;top:230px;width:589px;height:292px;background:#f0f0f0;border:1px solid #4a5359;border-radius:8px;box-sizing:border-box;box-shadow:0 20px 60px rgba(0,0,0,0.4)'></div><div style='position:absolute;left:84px;top:230px;width:589px;height:31px;background:#4a5359;border-radius:8px 8px 0 0'></div><span style='position:absolute;left:93.20px;top:239.80px;font-size:12px;font-weight:400;font-style:normal;color:#ececec;transform:scaleX(1.0243);transform-origin:0 0;'>Аргументы функции</span><span style='position:absolute;left:601.50px;top:239.30px;font-size:13.5px;font-weight:400;font-style:normal;color:#f4f4f4;transform:scaleX(0.8571);transform-origin:0 0;'>?</span><svg style='position:absolute;left:643px;top:239px;' width='12' height='12' viewBox='0 0 12 12'><line x1='1' y1='1' x2='11' y2='11' stroke='#e8e8e8' stroke-width='1.1'/><line x1='11' y1='1' x2='1' y2='11' stroke='#e8e8e8' stroke-width='1.1'/></svg><div style='position:absolute;left:91.5px;top:274.5px;width:573px;height:84px;border:1px solid #dcdcdc;box-sizing:border-box'></div><div style='position:absolute;left:95px;top:270px;width:66px;height:8px;background:#f0f0f0'></div><span style='position:absolute;left:97.50px;top:269.70px;font-size:10.8px;font-weight:400;font-style:normal;color:#111;transform:scaleX(0.9836);transform-origin:0 0;'>СУММЕСЛИ</span><span style='position:absolute;left:189.70px;top:292.70px;font-size:11.6px;font-weight:700;font-style:normal;color:#111;transform:scaleX(0.9764);transform-origin:0 0;'>Диапазон</span><span style='position:absolute;left:191.20px;top:314.60px;font-size:11.6px;font-weight:700;font-style:normal;color:#111;transform:scaleX(0.9667);transform-origin:0 0;'>Критерий</span><span style='position:absolute;left:107.20px;top:337.90px;font-size:11.6px;font-weight:400;font-style:normal;color:#111;'>Диапазон_суммирования</span><div style='position:absolute;left:253px;top:288px;width:191.5px;height:19.8px;background:#fff;border:1px solid #a0a0a0;box-sizing:border-box'></div><div style='position:absolute;left:423.2px;top:289px;width:20.8px;height:17.3px;background:#fff;border:1px solid #d4d4d4;border-radius:4px;box-sizing:border-box'></div><svg style='position:absolute;left:428px;top:292px;' width='10' height='12' viewBox='0 0 10 12'><path d='M1.2 5.6 L4.5 2 L7.8 5.6' fill='none' stroke='#000' stroke-width='1.9' stroke-linecap='square'/><line x1='4.5' y1='2' x2='4.5' y2='8.8' stroke='#000' stroke-width='1.7'/><rect x='1' y='9.7' width='7.4' height='1.4' fill='#000'/></svg><div style='position:absolute;left:454.8px;top:296.5px;width:6px;height:1.2px;background:#111'></div><div style='position:absolute;left:454.8px;top:299.3px;width:6px;height:1.2px;background:#111'></div><div style='position:absolute;left:253px;top:311px;width:191.5px;height:19.8px;background:#fff;border:1px solid #a0a0a0;box-sizing:border-box'></div><div style='position:absolute;left:423.2px;top:312px;width:20.8px;height:17.3px;background:#fff;border:1px solid #d4d4d4;border-radius:4px;box-sizing:border-box'></div><svg style='position:absolute;left:428px;top:315px;' width='10' height='12' viewBox='0 0 10 12'><path d='M1.2 5.6 L4.5 2 L7.8 5.6' fill='none' stroke='#000' stroke-width='1.9' stroke-linecap='square'/><line x1='4.5' y1='2' x2='4.5' y2='8.8' stroke='#000' stroke-width='1.7'/><rect x='1' y='9.7' width='7.4' height='1.4' fill='#000'/></svg><div style='position:absolute;left:454.8px;top:319.5px;width:6px;height:1.2px;background:#111'></div><div style='position:absolute;left:454.8px;top:322.3px;width:6px;height:1.2px;background:#111'></div><div style='position:absolute;left:253px;top:334px;width:191.5px;height:19.8px;background:#fff;border:1px solid #a0a0a0;box-sizing:border-box'></div><div style='position:absolute;left:423.2px;top:335px;width:20.8px;height:17.3px;background:#fff;border:1px solid #d4d4d4;border-radius:4px;box-sizing:border-box'></div><svg style='position:absolute;left:428px;top:338px;' width='10' height='12' viewBox='0 0 10 12'><path d='M1.2 5.6 L4.5 2 L7.8 5.6' fill='none' stroke='#000' stroke-width='1.9' stroke-linecap='square'/><line x1='4.5' y1='2' x2='4.5' y2='8.8' stroke='#000' stroke-width='1.7'/><rect x='1' y='9.7' width='7.4' height='1.4' fill='#000'/></svg><div style='position:absolute;left:454.8px;top:342.5px;width:6px;height:1.2px;background:#111'></div><div style='position:absolute;left:454.8px;top:345.3px;width:6px;height:1.2px;background:#111'></div><div style='position:absolute;left:256.9px;top:291.8px;width:33.2px;height:12.8px;background:#cbcbcb'></div><span style='position:absolute;left:256.73px;top:292.50px;font-size:11.6px;font-weight:400;font-style:normal;color:#000;transform:scaleX(0.8676);transform-origin:0 0;'>B2:B20</span><span style='position:absolute;left:257.30px;top:314.80px;font-size:11.6px;font-weight:400;font-style:normal;color:#000;transform:scaleX(1.0238);transform-origin:0 0;'>"&lt;5"</span><span style='position:absolute;left:471.00px;top:292.00px;font-size:11.6px;font-weight:400;font-style:normal;color:#111;transform:scaleX(0.9265);transform-origin:0 0;'>{4:5:1:2:12:3:7:23:47:3:2:1:4:5:1:2:12...</span><span style='position:absolute;left:471.50px;top:314.80px;font-size:11.6px;font-weight:400;font-style:normal;color:#111;transform:scaleX(1.0095);transform-origin:0 0;'>"&lt;5"</span><span style='position:absolute;left:471.00px;top:337.70px;font-size:11.6px;font-weight:700;font-style:normal;color:#a8a8a8;transform:scaleX(0.8605);transform-origin:0 0;'>ссылка</span><div style='position:absolute;left:454.8px;top:368px;width:6px;height:1.2px;background:#111'></div><div style='position:absolute;left:454.8px;top:371px;width:6px;height:1.2px;background:#111'></div><span style='position:absolute;left:471.00px;top:364.20px;font-size:11.6px;font-weight:400;font-style:normal;color:#111;transform:scaleX(0.9077);transform-origin:0 0;'>26</span><div style='position:absolute;left:94.7px;top:281.4px;width:570.5px;height:83.6px;border:4.3px solid #000;border-radius:10px;box-sizing:border-box;box-shadow:inset 0 0 6px rgba(0,0,0,0.25), 0 0 3px rgba(0,0,0,0.3)'></div><span style='position:absolute;left:91.30px;top:381.00px;font-size:11.6px;font-weight:400;font-style:normal;color:#111;transform:scaleX(0.9838);transform-origin:0 0;'>Суммирует ячейки, заданные указанным условием.</span><span style='position:absolute;left:235.00px;top:405.00px;font-size:11.6px;font-weight:700;font-style:normal;color:#111;transform:scaleX(0.9691);transform-origin:0 0;'>Диапазон</span><span style='position:absolute;left:297.70px;top:405.00px;font-size:11.6px;font-weight:400;font-style:normal;color:#111;transform:scaleX(1.0080);transform-origin:0 0;'>диапазон проверяемых ячеек.</span><div style='position:absolute;left:91px;top:454px;width:573px;height:1px;background:#dcdcdc'></div><span style='position:absolute;left:91.00px;top:467.80px;font-size:11.6px;font-weight:400;font-style:normal;color:#111;transform:scaleX(1.0185);transform-origin:0 0;'>Значение:</span><span style='position:absolute;left:154.80px;top:467.80px;font-size:11.6px;font-weight:400;font-style:normal;color:#111;transform:scaleX(0.9000);transform-origin:0 0;'>26</span><span style='position:absolute;left:91.00px;top:497.00px;font-size:11.6px;font-weight:400;font-style:normal;color:#0066cc;transform:scaleX(1.0145);transform-origin:0 0;text-decoration:underline;'>Справка по этой функции</span><div style='position:absolute;left:507px;top:491px;width:74px;height:21.5px;background:#fdfdfd;border:1.5px solid #0067c0;border-radius:4px;box-sizing:border-box'></div><span style='position:absolute;left:536.00px;top:496.00px;font-size:11.6px;font-weight:400;font-style:normal;color:#111;transform:scaleX(0.9062);transform-origin:0 0;'>ОК</span><div style='position:absolute;left:591px;top:491px;width:74px;height:21.5px;background:#fdfdfd;border:1px solid #d0d0d0;border-radius:4px;box-sizing:border-box'></div><span style='position:absolute;left:607.00px;top:496.00px;font-size:11.6px;font-weight:400;font-style:normal;color:#111;transform:scaleX(0.9643);transform-origin:0 0;'>Отмена</span>
</body></html>
